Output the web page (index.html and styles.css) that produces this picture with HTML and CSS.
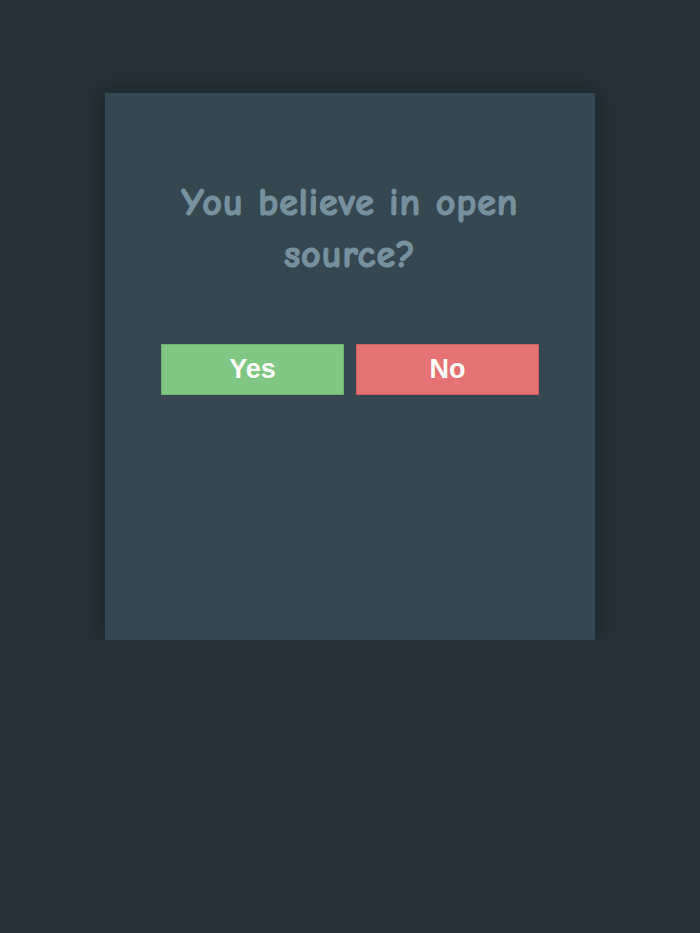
FILE: index.html
```html
<!DOCTYPE html>
<html lang="en">

<head>
  <meta charset="UTF-8">
  <meta name="viewport" content="width=device-width, initial-scale=1.0">
  <title>Open source?</title>
  <link rel="stylesheet" href="styles.css">
</head>

<body>
  <div class="card">
    <h1 class="question">You believe in open source?</h1>
    <div class="answers">
      <button class="yes">Yes</button>
      <button class="no">No</button>
    </div>
  </div>
</body>

</html>
```

FILE: styles.css
```css
body {
  margin: 0;
  background-color: #263238;
  font-family: 'Liberation Sans', Arial, sans-serif;
}

.card {
  box-sizing: border-box;
  width: 490px;
  height: 547px;
  margin: 93px auto 0;
  padding: 84px 56px 0;
  background-color: #37474f;
  box-shadow: 0 0 24px 4px rgba(0, 0, 0, .25);
}

.question {
  margin: 0;
  color: #78909c;
  font-family: 'Comic Sans MS', 'Comic Neue', 'Open Sans', sans-serif;
  font-size: 38px;
  font-weight: bold;
  line-height: 52px;
  letter-spacing: 1px;
  -webkit-text-stroke: 1.2px #78909c;
  text-align: center;
}

.answers {
  display: flex;
  gap: 12px;
  margin-top: 63px;
}

button {
  flex: 1;
  height: 51px;
  color: white;
  font-family: 'Liberation Sans', Arial, sans-serif;
  font-size: 27px;
  font-weight: bold;
  cursor: pointer;
}

.yes {
  background-color: #81c784;
  border: 1px solid #6fb072;
}

.no {
  background-color: #e57373;
  border: 1px solid #c86262;
}
```
